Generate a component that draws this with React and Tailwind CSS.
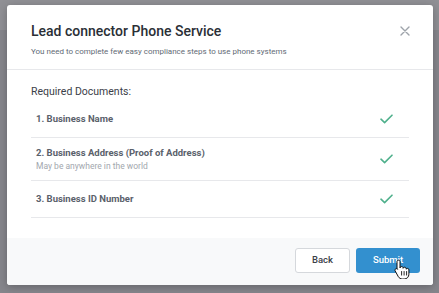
import React from "react";

function Check() {
  return (
    <svg width="13" height="10" viewBox="0 0 13 10" fill="none">
      <path d="M1 5.2 L4.6 8.6 L12 1.2" stroke="#4fb08c" strokeWidth="1.6" strokeLinecap="round" strokeLinejoin="round" />
    </svg>
  );
}

function HandCursor() {
  return (
    <svg width="16" height="20" viewBox="0 0 16 20" className="absolute left-[38px] top-[11px]">
      <path
        d="M4.5 1.2c.9 0 1.5.7 1.5 1.5v6.2c.2-.9.8-1.4 1.6-1.4.9 0 1.5.6 1.5 1.4v.4c.2-.7.8-1.1 1.5-1.1.9 0 1.5.6 1.5 1.4v.6c.3-.5.8-.8 1.4-.8.8 0 1.4.6 1.4 1.4v4.4c0 2.7-2 4.8-4.7 4.8H8.3c-1.7 0-3-.9-3.9-2.2L1.2 12c-.5-.8-.2-1.7.5-2.1.7-.4 1.5-.2 2 .4l-.7-.8V2.7c0-.8.6-1.5 1.5-1.5z"
        fill="#fff"
        stroke="#111"
        strokeWidth="1"
        strokeLinejoin="round"
      />
      <path d="M7.6 12.5v3.6M10.1 12.5v3.6M12.6 12.5v3.6" stroke="#111" strokeWidth="0.9" strokeLinecap="round" />
    </svg>
  );
}

export default function App() {
  const docs = [
    { title: "1. Business Name" },
    { title: "2. Business Address (Proof of Address)", note: "May be anywhere in the world" },
    { title: "3. Business ID Number" },
  ];

  return (
    <div className="w-[439px] h-[293px] overflow-hidden bg-[#86868c] font-['Roboto',sans-serif]">
      <div className="h-[30px] bg-[#909095] -mb-[30px]" />
      <div className="relative pt-[5px] pl-[7px]">
        <div className="w-[426px] h-[280px] bg-white rounded-[3px] shadow-[0_2px_8px_rgba(0,0,0,0.25)] flex flex-col overflow-hidden">
          {/* Header */}
          <div className="relative h-[65px] border-b border-[#e7e8eb] pl-[24px] pt-[16px]">
            <h1 className="text-[14px] leading-[20px] font-medium text-[#2a2f36]">Lead connector Phone Service</h1>
            <p className="mt-[6px] text-[8px] leading-[10px] text-[#626a75]">
              You need to complete few easy compliance steps to use phone systems
            </p>
            <button className="absolute right-[23px] top-[21px] text-[#9ea3aa]">
              <svg width="10" height="10" viewBox="0 0 10 10">
                <path d="M1 1L9 9M9 1L1 9" stroke="currentColor" strokeWidth="1.4" strokeLinecap="round" />
              </svg>
            </button>
          </div>

          {/* Body */}
          <div className="flex-1 px-[24px] pt-[15px]">
            <div className="text-[10.5px] leading-[14px] text-[#3b4048]">Required Documents:</div>
            <ul className="mt-[2px]">
              {docs.map((d) => (
                <li
                  key={d.title}
                  className={`flex items-center justify-between border-b border-[#e7e8eb] pl-[5px] pr-[16px] ${d.note ? "h-[43px]" : "h-[37px]"}`}
                >
                  <div>
                    <div className="text-[9.5px] leading-[12px] font-bold text-[#5a616b]">{d.title}</div>
                    {d.note && <div className="mt-[2px] text-[8.5px] leading-[11px] text-[#a2a7ae]">{d.note}</div>}
                  </div>
                  <Check />
                </li>
              ))}
            </ul>
          </div>

          {/* Footer */}
          <div className="h-[47px] bg-[#f8f9fa] flex items-start justify-end gap-[6px] pt-[10px] pr-[13px]">
            <button className="w-[55px] h-[25px] rounded-[3px] border border-[#d5d8dc] bg-white text-[9.5px] font-medium text-[#3b4048]">
              Back
            </button>
            <button className="relative w-[64px] h-[25px] rounded-[3px] bg-[#3390cf] text-[9.5px] font-medium text-white">
              Submit
              <HandCursor />
            </button>
          </div>
        </div>
      </div>
    </div>
  );
}
